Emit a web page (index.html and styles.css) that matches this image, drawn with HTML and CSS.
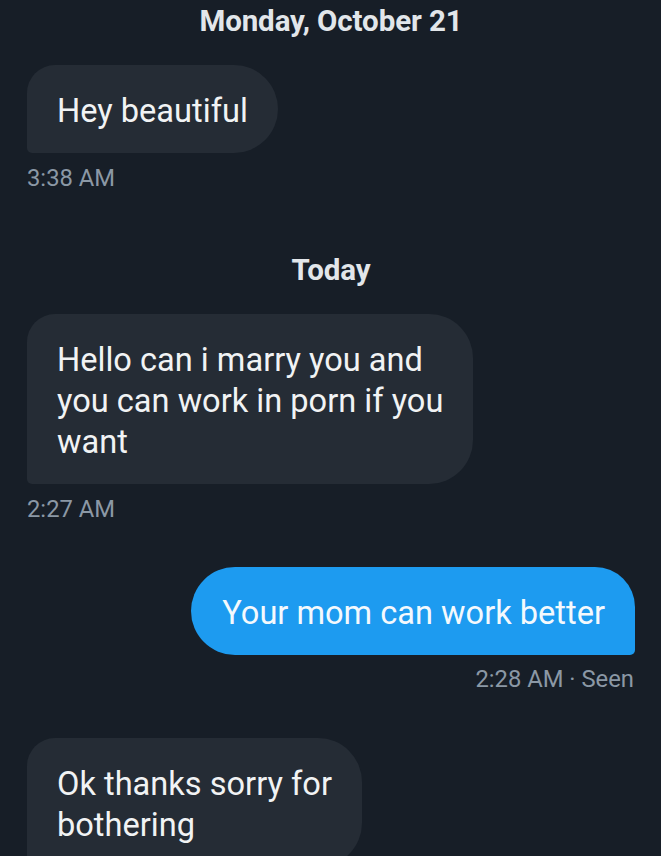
FILE: index.html
```html
<!DOCTYPE html>
<html lang="en">
<head>
<meta charset="utf-8">
<title>Messages</title>
<link rel="stylesheet" href="styles.css">
</head>
<body>
<main class="chat">
  <div class="day">Monday, October 21</div>
  <div class="msg in">
    <div class="bubble">Hey beautiful</div>
    <div class="meta">3:38 AM</div>
  </div>

  <div class="day day-gap">Today</div>
  <div class="msg in">
    <div class="bubble">Hello can i marry you and<br>you can work in porn if you<br>want</div>
    <div class="meta">2:27 AM</div>
  </div>

  <div class="msg out">
    <div class="bubble">Your mom can work better</div>
    <div class="meta">2:28 AM · Seen</div>
  </div>

  <div class="msg in">
    <div class="bubble">Ok thanks sorry for<br>bothering</div>
  </div>
</main>
</body>
</html>
```

FILE: styles.css
```css
html, body {
  margin: 0;
  padding: 0;
  background: #171e27;
}
body {
  font-family: Roboto, "Liberation Sans", Arial, sans-serif;
  color: #e7e9ea;
  overflow: hidden;
  height: 856px;
}
.chat {
  display: flex;
  flex-direction: column;
  padding: 3px 26px 0 27px;
}
.day {
  text-align: center;
  font-weight: 700;
  font-size: 29.5px;
  line-height: 36px;
  color: #e2e6ea;
  letter-spacing: -0.1px;
}
.day-gap {
  margin-top: 60px;
}
.msg {
  display: flex;
  flex-direction: column;
  margin-top: 26px;
}
.msg.in { align-items: flex-start; }
.msg.out { align-items: flex-end; margin-top: 44px; }
.msg.out + .msg { margin-top: 45px; }
.bubble {
  font-size: 32.6px;
  line-height: 41px;
  padding: 26px 30px 21px 30px;
  background: #252c35;
  color: #f1f3f4;
  border-radius: 28px 44px 44px 5px;
  white-space: nowrap;
}
.msg.out .bubble {
  background: #1d9bf0;
  color: #f4f9fd;
  border-radius: 44px 40px 5px 44px;
  padding-left: 31px;
}
.meta {
  margin-top: 11px;
  font-size: 23.8px;
  line-height: 28px;
  color: #8b98a5;
}
.msg.out .meta { margin-top: 10px; margin-right: 1px; }
```
